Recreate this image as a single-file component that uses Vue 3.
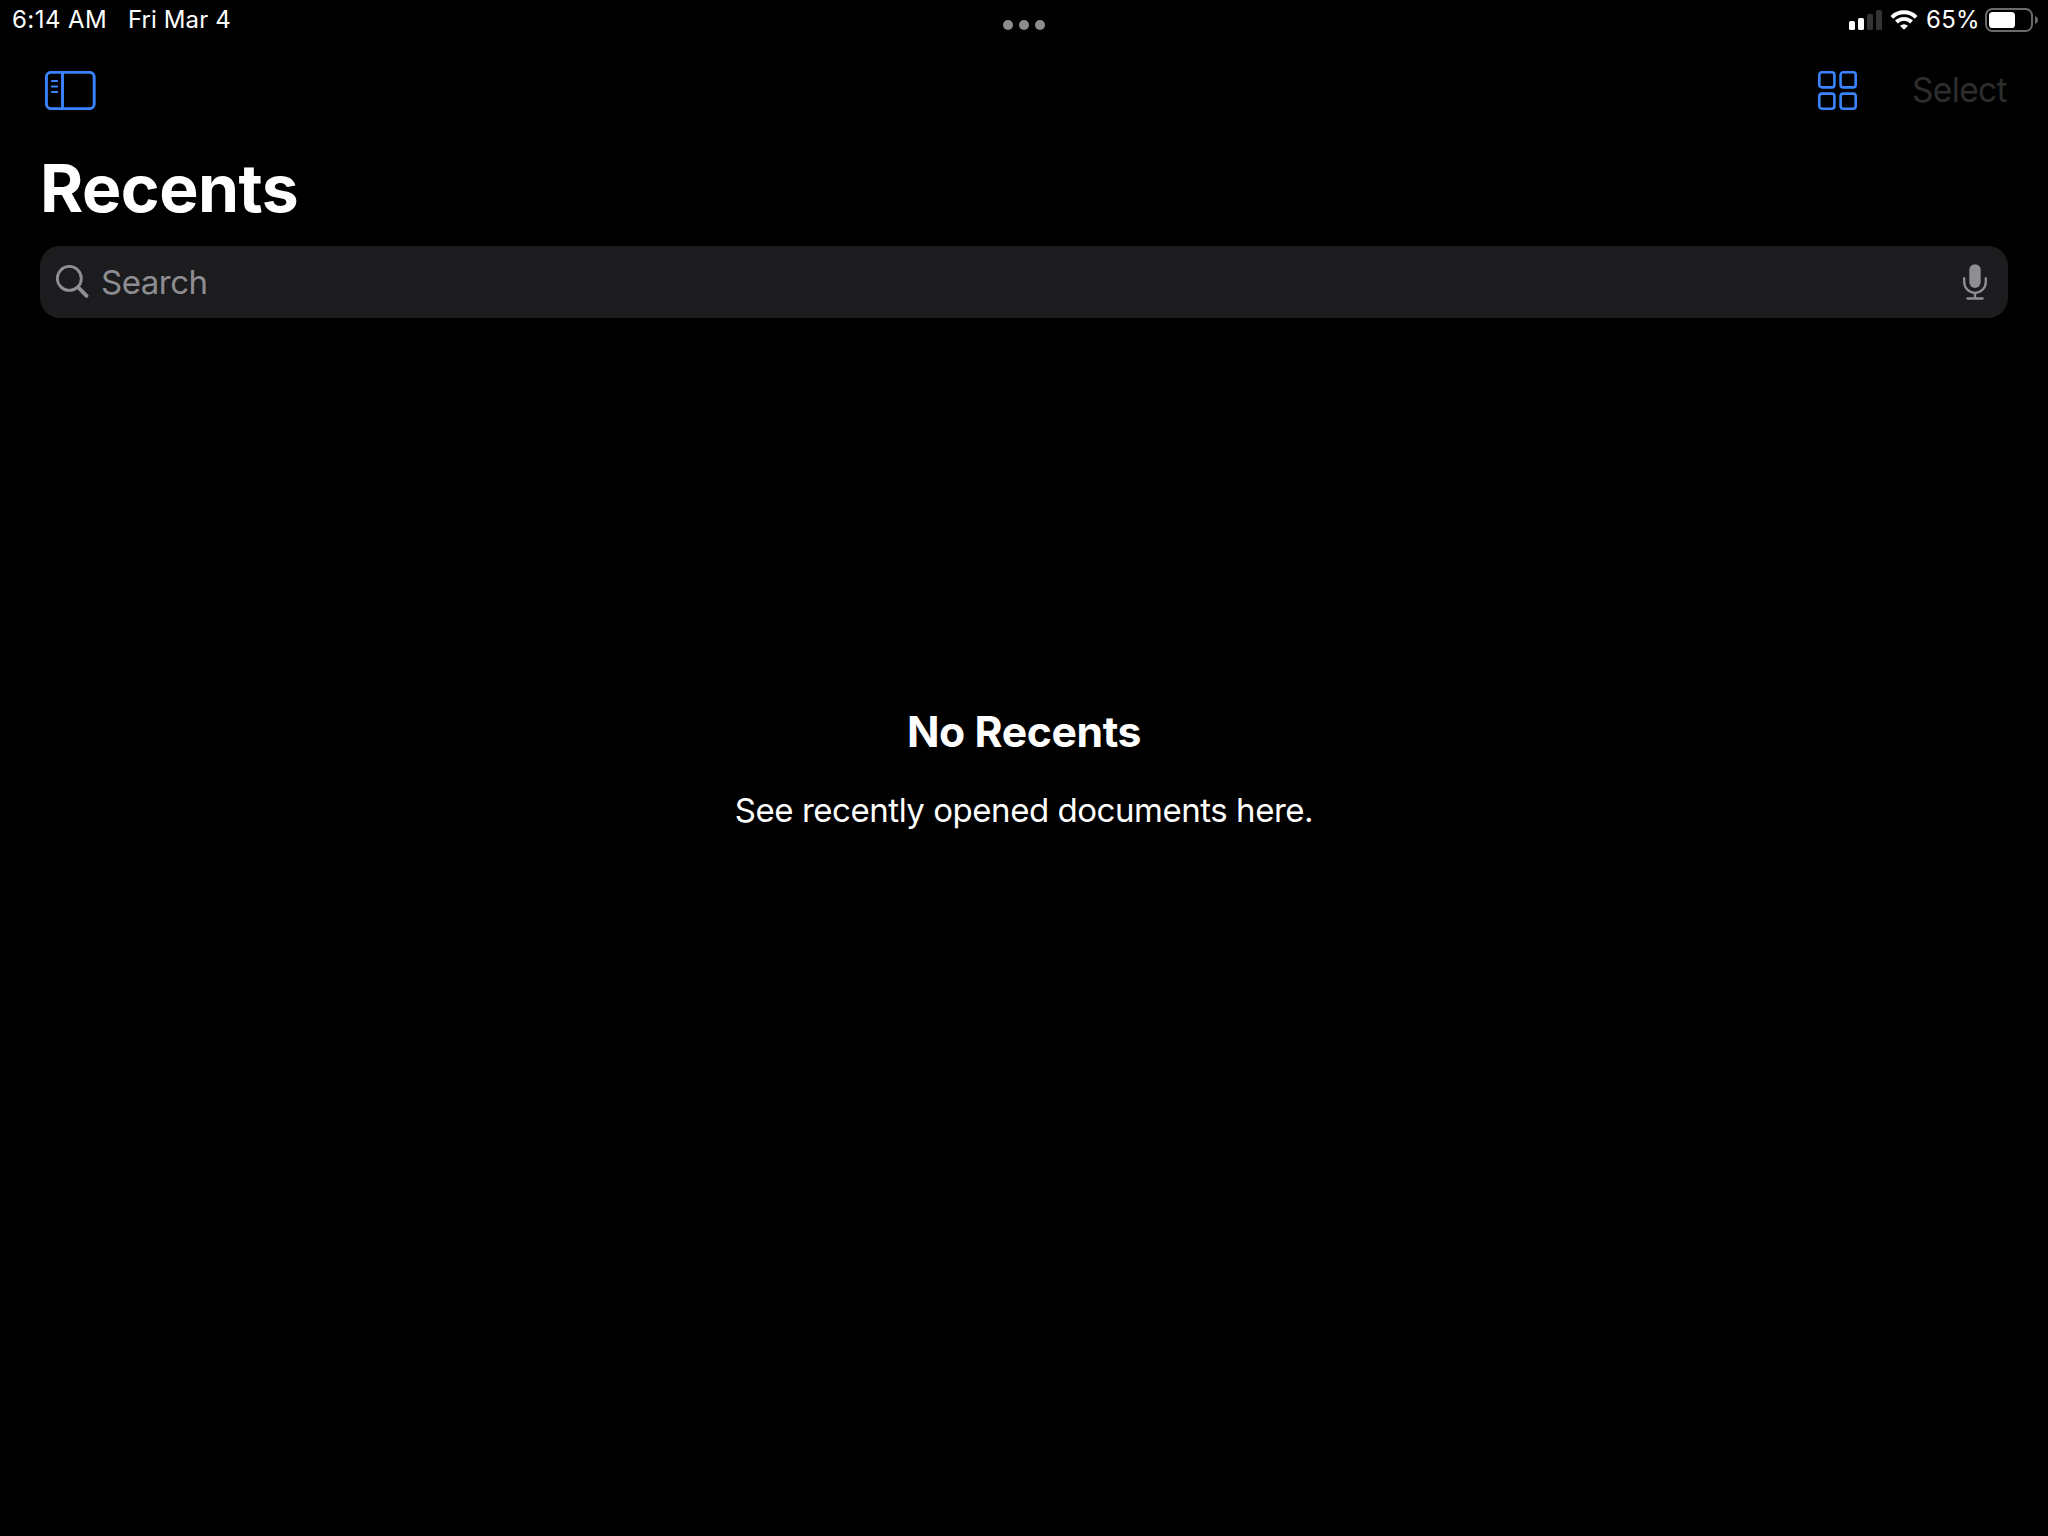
<script setup>
const dots = 3
const tiles = [[1.3, 1.3], [22.6, 1.3], [1.3, 22.6], [22.6, 22.6]]
const bars = [
  { x: 0, h: 9, on: true },
  { x: 9, h: 12, on: true },
  { x: 18, h: 16, on: false },
  { x: 27, h: 20, on: false }
]
</script>

<template>
  <div class="screen">
    <header class="status">
      <div class="status-left">
        <span class="time">6:14 AM</span>
        <span class="date">Fri Mar 4</span>
      </div>
      <div class="multitask"><i v-for="n in dots" :key="n"></i></div>
      <div class="status-right">
        <svg class="signal" width="33" height="20" viewBox="0 0 33 20">
          <rect v-for="b in bars" :key="b.x" :x="b.x" :y="20 - b.h" width="6" :height="b.h" rx="1.6" :fill="b.on ? '#fff' : '#333'" />
        </svg>
        <svg class="wifi" width="28" height="20" viewBox="0 0 28 20">
          <g fill="none" stroke="#fff" stroke-width="3.9">
            <path d="M1.9 7.3A17.2 17.2 0 0 1 26.1 7.3" />
            <path d="M6.4 12A10.9 10.9 0 0 1 21.6 12" />
          </g>
          <path d="M14 19.8L10 15.8A5.7 5.7 0 0 1 18 15.8Z" fill="#fff" />
        </svg>
        <span class="percent">65%</span>
        <svg class="battery" width="54" height="24" viewBox="0 0 54 24">
          <rect x="1" y="1" width="46" height="22" rx="6.5" fill="none" stroke="#6b6b6b" stroke-width="2" />
          <rect x="4" y="4" width="26" height="16" rx="3.6" fill="#fff" />
          <path d="M50 8C52 8.7 53 10.2 53 12S52 15.3 50 16Z" fill="#6b6b6b" />
        </svg>
      </div>
    </header>

    <nav class="toolbar">
      <svg width="51" height="39" viewBox="0 0 51 39" fill="none" stroke="#3a85ff">
        <rect x="1.4" y="1.4" width="47.8" height="36.2" rx="4.6" stroke-width="2.9" />
        <path d="M17.5 1.4V37.6" stroke-width="2.9" />
        <path d="M6.9 10H12.2M6.9 15.5H12.2M6.9 21H12.2" stroke-width="2" stroke-linecap="round" />
      </svg>
      <div class="actions">
        <svg width="39" height="39" viewBox="0 0 39 39" fill="none" stroke="#3a85ff" stroke-width="2.6">
          <rect v-for="(t, i) in tiles" :key="i" :x="t[0]" :y="t[1]" width="15.1" height="15.1" rx="2.6" />
        </svg>
        <span class="select">Select</span>
      </div>
    </nav>

    <h1>Recents</h1>

    <div class="search">
      <svg width="34" height="34" viewBox="0 0 34 34" fill="none" stroke="#8e8e93" stroke-linecap="round">
        <circle cx="13.3" cy="13.4" r="12" stroke-width="2.9" />
        <path d="M22.5 22.6L30.6 30.8" stroke-width="3.8" />
      </svg>
      <span class="placeholder">Search</span>
      <svg class="mic" width="24" height="36" viewBox="0 0 24 36">
        <rect x="6.3" y="0.2" width="11.4" height="23.8" rx="5.7" fill="#8e8e93" />
        <path d="M1.2 14.2V18A10.8 10.8 0 0 0 22.8 18V14.2M12 29V34.5M4.4 34.5H19.6" fill="none" stroke="#8e8e93" stroke-width="2.3" stroke-linecap="round" />
      </svg>
    </div>

    <main class="empty">
      <h2>No Recents</h2>
      <p>See recently opened documents here.</p>
    </main>
  </div>
</template>

<style>
body {
  background: #000;
}
</style>

<style scoped>
.screen {
  height: 1536px;
  overflow: hidden;
  background: #000;
  color: #fff;
  font-family: Inter, "Liberation Sans", sans-serif;
}
svg {
  display: block;
  flex: none;
}
.status {
  display: grid;
  grid-template-columns: 1fr 42px 1fr;
  height: 40px;
  font-size: 24px;
  line-height: 40px;
}
.status-left {
  display: flex;
  padding-left: 12px;
}
.time {
  width: 116px;
  letter-spacing: 0.45px;
}
.date {
  letter-spacing: 0.1px;
}
.multitask {
  display: flex;
  justify-content: space-between;
  padding-top: 20px;
}
.multitask i {
  width: 10px;
  height: 10px;
  border-radius: 50%;
  background: #8c8c8c;
}
.status-right {
  display: flex;
  justify-content: flex-end;
  padding-right: 9px;
}
.signal {
  margin: 10px 8px 0 0;
}
.wifi {
  margin-top: 10px;
}
.percent {
  width: 59px;
  margin-left: 8px;
  letter-spacing: 0.3px;
}
.battery {
  margin-top: 8px;
}
.toolbar {
  display: flex;
  align-items: center;
  justify-content: space-between;
  height: 101px;
  padding: 0 40px 0 45px;
}
.actions {
  display: flex;
  align-items: center;
}
.select {
  width: 96px;
  margin: 0 0 2px 55px;
  color: #2d2d2e;
  font-size: 33.4px;
  line-height: 40px;
  letter-spacing: -0.6px;
}
h1 {
  margin: 0;
  padding: 7px 0 18px 40px;
  font-size: 66px;
  font-weight: 700;
  line-height: 80px;
  letter-spacing: -0.5px;
}
.search {
  display: flex;
  align-items: center;
  height: 72px;
  margin: 0 40px;
  padding: 0 21px 0 16px;
  box-sizing: border-box;
  border-radius: 20px;
  background: #1c1c1e;
}
.placeholder {
  margin-left: 11px;
  color: #8d8d91;
  font-size: 33px;
  line-height: 72px;
  letter-spacing: -0.5px;
}
.mic {
  margin-left: auto;
}
.empty {
  padding-top: 384px;
  text-align: center;
}
h2 {
  margin: 0;
  font-size: 42.7px;
  font-weight: 700;
  line-height: 60px;
  letter-spacing: -0.4px;
}
p {
  margin: 28px 0 0;
  font-size: 33px;
  line-height: 40px;
  letter-spacing: -0.46px;
}
</style>
